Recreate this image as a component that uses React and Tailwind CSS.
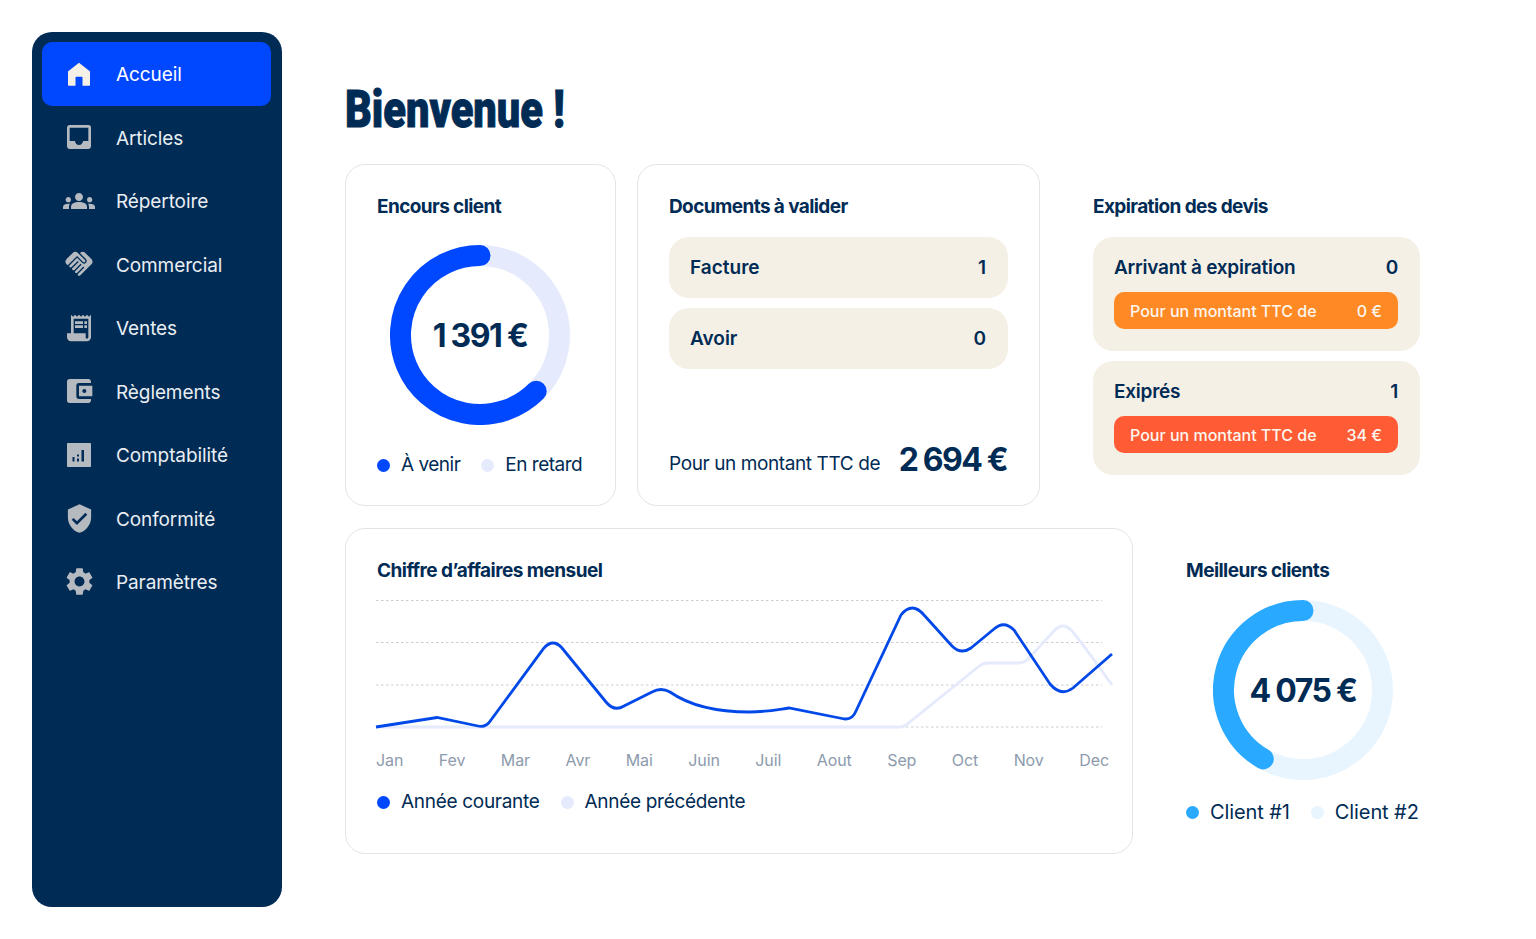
import { MdInbox, MdGroups, MdHandshake, MdReceiptLong, MdAccountBalanceWallet, MdVerifiedUser, MdSettings } from 'react-icons/md';

const HomeIcon = ({ size }) => (
  <svg width={size} height={size} viewBox="0 0 24 24" fill="currentColor">
    <path d="M12 .8 1.2 9.2c-.1 0-.2.2-.2.4V23c0 .5.3.8.8.8H8.500V15.500c0-.5.3-.8.8-.8h5.400c.5 0 .8.3.8.8V23.800h6.700c.5 0 .8-.3.8-.8V9.600c0-.2-.1-.4-.2-.4z" />
  </svg>
);

const ChartIcon = ({ size }) => (
  <svg width={size} height={size} viewBox="0 0 24 24" fill="currentColor" fillRule="evenodd">
    <path d="M1 0h22c.6 0 1 .4 1 1v22c0 .6-.4 1-1 1H1c-.6 0-1-.4-1-1V1c0-.6.4-1 1-1zM5.500 14v4.500h2V14zM10 11.500v2h2v-2zM10 15.500v3h2v-3zM14.500 7v11.500h2.500V7z" />
  </svg>
);

const navItems = [
  { label: 'Accueil', Icon: HomeIcon, size: 24, active: true },
  { label: 'Articles', Icon: MdInbox, size: 32 },
  { label: 'Répertoire', Icon: MdGroups, size: 32 },
  { label: 'Commercial', Icon: MdHandshake, size: 32 },
  { label: 'Ventes', Icon: MdReceiptLong, size: 32 },
  { label: 'Règlements', Icon: MdAccountBalanceWallet, size: 32 },
  { label: 'Comptabilité', Icon: ChartIcon, size: 24 },
  { label: 'Conformité', Icon: MdVerifiedUser, size: 31 },
  { label: 'Paramètres', Icon: MdSettings, size: 33 },
];

const months = ['Jan', 'Fev', 'Mar', 'Avr', 'Mai', 'Juin', 'Juil', 'Aout', 'Sep', 'Oct', 'Nov', 'Dec'];

function Legend({ color, label }) {
  return (
    <div className="flex items-center gap-[11px]">
      <span className={`w-[13px] h-[13px] rounded-full ${color}`} />
      <span>{label}</span>
    </div>
  );
}

function Donut({ track, color, arc, amount }) {
  return (
    <div className="relative w-[180px] h-[180px]">
      <svg width="180" height="180" viewBox="0 0 180 180" fill="none" strokeWidth="21">
        <circle cx="90" cy="90" r="79.5" stroke={track} />
        <path d={arc} stroke={color} strokeLinecap="round" />
      </svg>
      <div className="absolute inset-0 pt-[2px] flex items-center justify-center text-[32px] font-bold tracking-[-1.5px] [word-spacing:-0.5px] text-[#002b55]">
        {amount}
      </div>
    </div>
  );
}

function Chart() {
  return (
    <svg width="740" height="140" viewBox="376 595 740 140" fill="none" className="overflow-visible">
      {[600.5, 642.5, 685, 727].map(y => (
        <line key={y} x1="376" x2="1102" y1={y} y2={y} stroke="#c9ccd1" strokeWidth="1" strokeDasharray="2.500 2.500" />
      ))}
      <path
        d="M376 727 L900 727 Q903 727 906 725 L978 667 Q983 663 988 663 L1018 663 Q1024 663 1028 659 L1054 631 Q1063 621 1072 631 Q1080 640 1112 685"
        stroke="#e5eafc"
        strokeWidth="2.800"
      />
      <path
        d="M376 727 L437 717.500 L478 726 Q486 728 491 720 L544 648 Q553 638 562 648 L606 702 Q614 712 624 706 L652 692 Q661 687 670 692 C690 706 720 712 750 712 C765 712 775 710 789 708 L842 718.500 Q852 721 856 711 L901 615 Q912 601 924 615 L952 646 Q961 655 971 648 L994 629 Q1004 620 1014 630 L1050 684 Q1061 697 1073 688 L1112 654"
        stroke="#0048e8"
        strokeWidth="2.800"
      />
    </svg>
  );
}

export default function App() {
  return (
    <div className="w-[1536px] h-[939px] bg-white flex pl-[32px] pt-[32px] text-[#002b55] font-['Inter','Liberation_Sans',sans-serif] overflow-hidden">
      {/* Sidebar */}
      <aside className="w-[250px] h-[875px] shrink-0 rounded-[20px] bg-[#002b55] pl-[10px] pr-[11px] py-[10px]">
        {navItems.map(({ label, Icon, size, active }) => (
          <div
            key={label}
            className={`h-[63.5px] flex items-center rounded-[10px] text-[19px] tracking-[-0.1px] text-[#e9eef2] ${active ? 'bg-[#0048ff] text-white' : ''}`}
          >
            <div className={`w-[74px] flex justify-center ${active ? 'text-[#f5f0e6]' : 'text-[#b5bac0]'}`}>
              <Icon size={size} />
            </div>
            <span className="pt-[3px]">{label}</span>
          </div>
        ))}
      </aside>

      {/* Main */}
      <main className="ml-[63px] flex flex-col">
        <h1 className="mt-[46px] h-[86px] font-['Roboto',sans-serif] text-[52px] leading-[64px] font-black text-[#002b55] origin-left scale-x-[0.8] whitespace-nowrap [-webkit-text-stroke:1px_#002b55]">
          Bienvenue !
        </h1>

        <div className="flex">
          {/* Encours */}
          <section className="w-[271px] h-[342px] rounded-[20px] border border-[#e2e4e6] px-[31px] pt-[30px]">
            <h2 className="text-[19px] leading-[24px] font-bold tracking-[-0.6px]">Encours client</h2>
            <div className="mt-[26px] ml-[13px]">
              <Donut track="#e5eafc" color="#0048ff" arc="M90 10.500 A79.500 79.500 0 1 0 146.200 146.200" amount="1 391 €" />
            </div>
            <div className="mt-[28px] flex gap-[21px] text-[19px] leading-[24px] tracking-[-0.5px] whitespace-nowrap">
              <Legend color="bg-[#0048ff]" label="À venir" />
              <Legend color="bg-[#e5eafc]" label="En retard" />
            </div>
          </section>

          {/* Documents */}
          <section className="ml-[21px] w-[403px] h-[342px] rounded-[20px] border border-[#e2e4e6] px-[31px] pt-[30px]">
            <h2 className="text-[19px] leading-[24px] font-bold tracking-[-0.6px]">Documents à valider</h2>
            <div className="mt-[18px] flex flex-col gap-[10px]">
              {[['Facture', '1'], ['Avoir', '0']].map(([label, n]) => (
                <div key={label} className="h-[61px] rounded-[20px] bg-[#f5f0e6] pl-[21px] pr-[22px] pt-[2px] flex items-center justify-between text-[19px] font-semibold">
                  <span>{label}</span>
                  <span>{n}</span>
                </div>
              ))}
            </div>
            <div className="mt-[71px] flex items-center justify-between">
              <span className="mt-[8px] text-[19px] tracking-[-0.4px]">Pour un montant TTC de</span>
              <span className="mr-[1px] text-[32px] leading-[40px] font-bold tracking-[-1.6px] [word-spacing:-0.5px]">2 694 €</span>
            </div>
          </section>

          {/* Devis */}
          <section className="ml-[53px] w-[327px] pt-[31px]">
            <h2 className="text-[19px] leading-[24px] font-bold tracking-[-0.6px]">Expiration des devis</h2>
            <div className="mt-[18px] flex flex-col gap-[10px]">
              {[
                { title: 'Arrivant à expiration', n: '0', amount: '0 €', color: 'bg-[#ff8a25]' },
                { title: 'Exiprés', n: '1', amount: '34 €', color: 'bg-[#ff5c35]' },
              ].map(item => (
                <div key={item.title} className="h-[114px] rounded-[20px] bg-[#f5f0e6] pl-[21px] pr-[22px] pt-[19px]">
                  <div className="flex justify-between text-[19px] leading-[24px] font-semibold tracking-[-0.25px]">
                    <span>{item.title}</span>
                    <span>{item.n}</span>
                  </div>
                  <div className={`mt-[12px] h-[37px] rounded-[10px] ${item.color} px-[16px] flex items-center justify-between text-[16px] font-medium text-[#fbf6ee]`}>
                    <span>Pour un montant TTC de</span>
                    <span>{item.amount}</span>
                  </div>
                </div>
              ))}
            </div>
          </section>
        </div>

        <div className="mt-[22px] flex">
          {/* Chiffre d'affaires */}
          <section className="w-[788px] h-[326px] rounded-[20px] border border-[#e2e4e6] px-[30px] pt-[29px]">
            <h2 className="ml-[1px] pt-[1px] text-[19px] leading-[24px] font-bold tracking-[-0.55px]">Chiffre d’affaires mensuel</h2>
            <div className="mt-[12px]">
              <Chart />
            </div>
            <div className="mt-[15px] w-[733px] flex justify-between text-[16px] leading-[20px] tracking-[-0.1px] text-[#8d9bad]">
              {months.map(m => <span key={m}>{m}</span>)}
            </div>
            <div className="mt-[20px] ml-[1px] flex gap-[21px] text-[19px] leading-[24px] tracking-[-0.3px]">
              <Legend color="bg-[#0048ff]" label="Année courante" />
              <Legend color="bg-[#e5eafc]" label="Année précédente" />
            </div>
          </section>

          {/* Meilleurs clients */}
          <section className="ml-[53px] w-[240px] pt-[31px]">
            <h2 className="text-[19px] leading-[24px] font-bold tracking-[-0.55px]">Meilleurs clients</h2>
            <div className="mt-[17px] ml-[27px]">
              <Donut track="#e8f5ff" color="#29a9ff" arc="M90 10.500 A79.500 79.500 0 0 0 50.250 158.850" amount="4 075 €" />
            </div>
            <div className="mt-[20px] flex gap-[21px] text-[20px] leading-[24px] tracking-[-0.1px] whitespace-nowrap -ml-[0px]">
              <Legend color="bg-[#29a9ff]" label="Client #1" />
              <Legend color="bg-[#e8f5ff]" label="Client #2" />
            </div>
          </section>
        </div>
      </main>
    </div>
  );
}
